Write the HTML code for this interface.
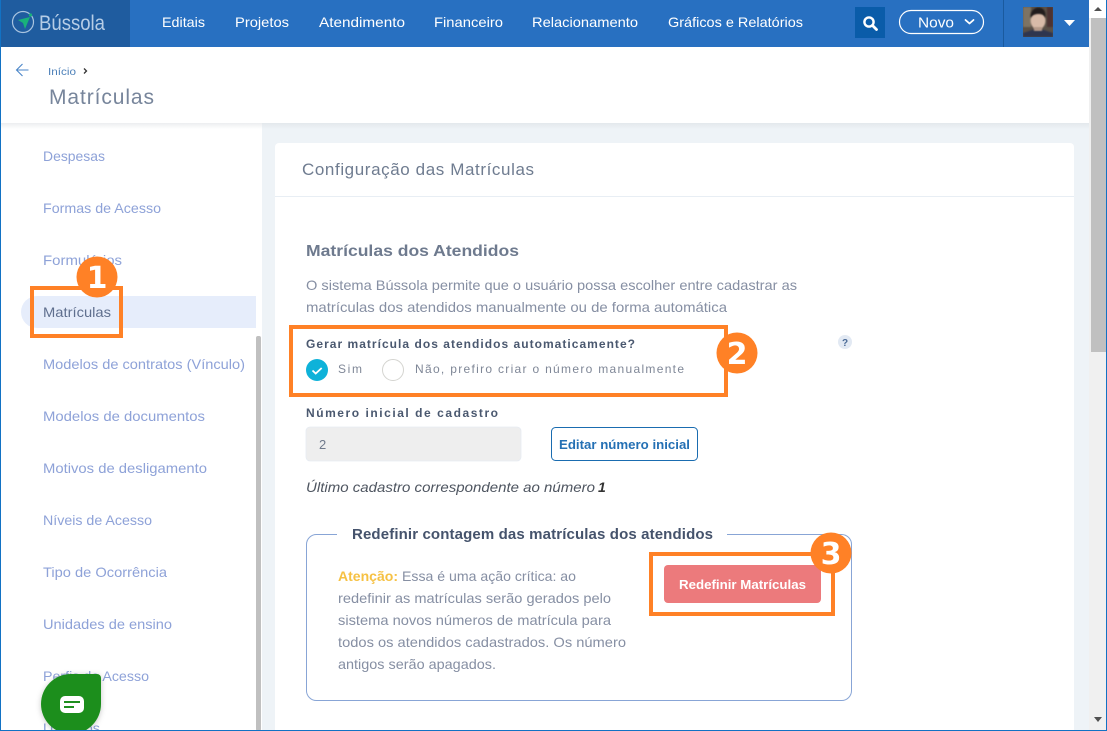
<!DOCTYPE html>
<html lang="pt-BR">
<head>
<meta charset="utf-8">
<title>Matrículas</title>
<style>
html,body{margin:0;padding:0;width:1107px;height:731px;overflow:hidden;background:#fff}
svg{display:block}
text{font-family:"Liberation Sans",sans-serif;white-space:pre}
.nav{font-size:14px;fill:#fff}
.side{font-size:14px;fill:#8ea2d8}
.body{font-size:14px;fill:#868fa3}
.lab{font-size:12px;font-weight:bold;fill:#4a586f}
.opt{font-size:12px;fill:#7f8797}
.num{font-family:"DejaVu Sans",sans-serif;font-size:30px;font-weight:bold;fill:#fff}
</style>
</head>
<body>
<svg width="1107" height="731" viewBox="0 0 1107 731" xmlns="http://www.w3.org/2000/svg">
<defs>
<linearGradient id="hs" x1="0" y1="0" x2="0" y2="1"><stop offset="0" stop-color="#e3e8ec"/><stop offset="1" stop-color="#eef3f7"/></linearGradient>
<linearGradient id="hw" x1="0" y1="0" x2="0" y2="1"><stop offset="0" stop-color="#eceef0"/><stop offset="1" stop-color="#ffffff"/></linearGradient>
<filter id="chatS" x="-30%" y="-30%" width="160%" height="160%"><feDropShadow dx="0" dy="1" stdDeviation="3" flood-color="#000" flood-opacity=".22"/></filter>
<filter id="bl" x="-10%" y="-10%" width="120%" height="120%"><feGaussianBlur stdDeviation=".7"/></filter>
<clipPath id="av"><rect x="1023" y="7" width="30" height="30"/></clipPath>
</defs>

<!-- backgrounds -->
<rect width="1107" height="731" fill="#fff"/>
<rect x="262" y="123" width="828" height="608" fill="#eef3f7"/>
<rect x="1" y="123" width="261" height="6" fill="url(#hw)"/>
<rect x="262" y="123" width="828" height="6" fill="url(#hs)"/>

<!-- scrollbar -->
<rect x="1089" y="0" width="18" height="731" fill="#f0f0f0"/>
<rect x="1089" y="0" width="18" height="18" fill="#fff"/>
<rect x="1091" y="18" width="15" height="334" fill="#c0c0c0"/>
<path d="M1094 11l4-4 4 4z" fill="#505050"/>
<path d="M1094 717h8l-4 5z" fill="#505050"/>

<!-- top bar -->
<rect x="0" y="0" width="1089" height="47" fill="#2870c1"/>
<rect x="1" y="0" width="129" height="47" fill="#1f5c9f"/>
<circle cx="23" cy="22" r="10.5" fill="none" stroke="#a9c4e0" stroke-width="1.2"/>
<path d="M18 20l12-3-5 12-2-6z" fill="#19b27a"/>
<circle cx="30.5" cy="15" r="1.6" fill="#19b27a"/>
<text x="39" y="30" font-size="21" fill="#b6cde6" textLength="66" lengthAdjust="spacingAndGlyphs">Bússola</text>

<text class="nav" x="162" y="27" textLength="43" lengthAdjust="spacingAndGlyphs">Editais</text>
<text class="nav" x="235" y="27" textLength="54" lengthAdjust="spacingAndGlyphs">Projetos</text>
<text class="nav" x="319" y="27" textLength="86" lengthAdjust="spacingAndGlyphs">Atendimento</text>
<text class="nav" x="434" y="27" textLength="69" lengthAdjust="spacingAndGlyphs">Financeiro</text>
<text class="nav" x="532" y="27" textLength="106" lengthAdjust="spacingAndGlyphs">Relacionamento</text>
<text class="nav" x="668" y="27" textLength="135" lengthAdjust="spacingAndGlyphs">Gráficos e Relatórios</text>

<rect x="855" y="7" width="30" height="31" fill="#0a5ca9"/>
<circle cx="869" cy="22" r="4.6" fill="none" stroke="#fff" stroke-width="2.4"/>
<path d="M872.5 25.5l4 4" stroke="#fff" stroke-width="2.8" stroke-linecap="round"/>

<rect x="899.5" y="10.5" width="84" height="23" rx="11.5" fill="none" stroke="#fff" stroke-width="1.2"/>
<text x="918" y="27.5" font-size="15" fill="#fff" textLength="36" lengthAdjust="spacingAndGlyphs">Novo</text>
<path d="M965.5 20l4 3.5 4-3.5" fill="none" stroke="#fff" stroke-width="1.8" stroke-linecap="round" stroke-linejoin="round"/>

<rect x="1003" y="0" width="1" height="47" fill="#1a5a9e"/>

<!-- avatar -->
<g clip-path="url(#av)">
<rect x="1023" y="7" width="30" height="30" fill="#5a5046"/>
<rect x="1023" y="7" width="8" height="20" fill="#7d7364" filter="url(#bl)"/>
<rect x="1047" y="7" width="6" height="20" fill="#4e3230" filter="url(#bl)"/>
<path d="M1023 37v-4l9-3h12l9 3v4z" fill="#2f3550" filter="url(#bl)"/>
<ellipse cx="1038" cy="20.500" rx="7.500" ry="9" fill="#d9bba8" filter="url(#bl)"/>
<rect x="1034" y="27" width="8" height="4" fill="#b59988" filter="url(#bl)"/>
<path d="M1030.500 18c-.5-7 4-10.500 8-10.500s8 3 7 10.500c-1.500-3-3.500-4-7-4s-6 1-8 4z" fill="#211c1a" filter="url(#bl)"/>
</g>
<path d="M1064 20h11l-5.500 6z" fill="#fff"/>

<!-- page header -->
<path d="M22.500 64l-6 6 6 6M16.500 70h12" fill="none" stroke="#4a86c8" stroke-width="1.100"/>
<text x="48" y="75" font-size="10" fill="#4b7fb8" textLength="28" lengthAdjust="spacingAndGlyphs">Início</text>
<path d="M84 68.500l2.500 2.500-2.500 2.500" fill="none" stroke="#333" stroke-width="1.300"/>
<text x="49" y="104" font-size="21" fill="#77859b" textLength="105" lengthAdjust="spacing">Matrículas</text>

<!-- sidebar -->
<path d="M37 296h219v32H37a16 16 0 0 1 0-32z" fill="#e6edfb"/>
<rect x="256" y="336" width="5" height="395" rx="2" fill="#c0c0c0"/>
<text class="side" x="43" y="161" textLength="62" lengthAdjust="spacingAndGlyphs">Despesas</text>
<text class="side" x="43" y="213" textLength="118" lengthAdjust="spacingAndGlyphs">Formas de Acesso</text>
<text class="side" x="43" y="265" textLength="79" lengthAdjust="spacingAndGlyphs">Formulários</text>
<text class="side" x="43" y="317" style="fill:#5f6f8e" textLength="68" lengthAdjust="spacingAndGlyphs">Matrículas</text>
<text class="side" x="43" y="369" textLength="202" lengthAdjust="spacingAndGlyphs">Modelos de contratos (Vínculo)</text>
<text class="side" x="43" y="421" textLength="162" lengthAdjust="spacingAndGlyphs">Modelos de documentos</text>
<text class="side" x="43" y="473" textLength="164" lengthAdjust="spacingAndGlyphs">Motivos de desligamento</text>
<text class="side" x="43" y="525" textLength="109" lengthAdjust="spacingAndGlyphs">Níveis de Acesso</text>
<text class="side" x="43" y="577" textLength="124" lengthAdjust="spacingAndGlyphs">Tipo de Ocorrência</text>
<text class="side" x="43" y="629" textLength="129" lengthAdjust="spacingAndGlyphs">Unidades de ensino</text>
<text class="side" x="43" y="681" textLength="106" lengthAdjust="spacingAndGlyphs">Perfis de Acesso</text>
<text class="side" x="43" y="733" textLength="57" lengthAdjust="spacingAndGlyphs">Usuários</text>

<!-- card -->
<path d="M279 143h791a4 4 0 0 1 4 4v584H275V147a4 4 0 0 1 4-4z" fill="#fff"/>
<rect x="275" y="196" width="799" height="1" fill="#e8eef4"/>
<text x="302" y="175" font-size="17" fill="#6f7c90" textLength="232" lengthAdjust="spacing">Configuração das Matrículas</text>
<text x="306" y="256" font-size="16" font-weight="bold" fill="#6e7a8e" textLength="213" lengthAdjust="spacingAndGlyphs">Matrículas dos Atendidos</text>
<text class="body" x="306" y="290" textLength="491" lengthAdjust="spacingAndGlyphs">O sistema Bússola permite que o usuário possa escolher entre cadastrar as</text>
<text class="body" x="306" y="312" textLength="421" lengthAdjust="spacingAndGlyphs">matrículas dos atendidos manualmente ou de forma automática</text>

<text class="lab" x="306" y="348" textLength="329" lengthAdjust="spacing">Gerar matrícula dos atendidos automaticamente?</text>
<circle cx="317" cy="370" r="11" fill="#0eb2d9"/>
<path d="M312.500 370.500l3.200 3 6-5.500" fill="none" stroke="#fff" stroke-width="1.800"/>
<text class="opt" x="338" y="373" textLength="24" lengthAdjust="spacing">Sim</text>
<circle cx="393" cy="370" r="10.500" fill="#fff" stroke="#d4d4d0" stroke-width="1"/>
<text class="opt" x="415" y="373" textLength="269" lengthAdjust="spacing">Não, prefiro criar o número manualmente</text>

<circle cx="845" cy="342" r="7" fill="#e2e9f3"/>
<text x="845" y="346" font-size="10" font-weight="bold" fill="#4a6a96" text-anchor="middle">?</text>

<text class="lab" x="306" y="417" textLength="192" lengthAdjust="spacing">Número inicial de cadastro</text>
<rect x="306" y="427" width="215" height="34" rx="4" fill="#eeeeee" stroke="#e6ebf2" stroke-width=".8"/>
<text x="319" y="449" font-size="13" fill="#707a8c">2</text>
<rect x="551.500" y="427.500" width="146" height="33" rx="4" fill="#fff" stroke="#1a6cb0" stroke-width="1"/>
<text x="559" y="449" font-size="13" font-weight="bold" fill="#2470b4" textLength="131" lengthAdjust="spacingAndGlyphs">Editar número inicial</text>
<text x="306" y="492" font-size="14" font-style="italic" fill="#4e5560" textLength="289" lengthAdjust="spacingAndGlyphs">Último cadastro correspondente ao número</text>
<text x="598" y="492" font-size="14" font-style="italic" font-weight="bold" fill="#333">1</text>

<!-- fieldset -->
<path d="M337 534.500H317a10 10 0 0 0-10.500 10V690a10 10 0 0 0 10.500 10.500h524a10 10 0 0 0 10.500-10.500V545a10 10 0 0 0-10.500-10.500H727" fill="none" stroke="#88a5d6" stroke-width="1"/>
<text x="352" y="539" font-size="15" font-weight="bold" fill="#45536c" textLength="361" lengthAdjust="spacing">Redefinir contagem das matrículas dos atendidos</text>

<text x="338" y="581" font-size="14" font-weight="bold" fill="#f6c143" textLength="60" lengthAdjust="spacingAndGlyphs">Atenção:</text>
<text class="body" x="402" y="581" textLength="174" lengthAdjust="spacingAndGlyphs">Essa é uma ação crítica: ao</text>
<text class="body" x="338" y="603" textLength="273" lengthAdjust="spacingAndGlyphs">redefinir as matrículas serão gerados pelo</text>
<text class="body" x="338" y="625" textLength="273" lengthAdjust="spacingAndGlyphs">sistema novos números de matrícula para</text>
<text class="body" x="338" y="647" textLength="288" lengthAdjust="spacingAndGlyphs">todos os atendidos cadastrados. Os número</text>
<text class="body" x="338" y="669" textLength="158" lengthAdjust="spacingAndGlyphs">antigos serão apagados.</text>

<rect x="664" y="565" width="157" height="38" rx="4" fill="#ec7a7c"/>
<text x="679" y="589" font-size="13" font-weight="bold" fill="#fff" textLength="127" lengthAdjust="spacingAndGlyphs">Redefinir Matrículas</text>

<!-- chat bubble -->
<path d="M71 674h26a4 4 0 0 1 4 4v26a30 30 0 1 1-60 0 30 30 0 0 1 30-30z" fill="#1e8e1e" filter="url(#chatS)"/>
<rect x="60" y="696" width="24" height="17" rx="5" fill="#fff"/>
<rect x="64" y="701" width="16" height="2" fill="#1e8e1e"/>
<rect x="64" y="706" width="10" height="2" fill="#1e8e1e"/>

<!-- annotations -->
<rect x="32" y="288" width="89" height="48" fill="none" stroke="#ff8126" stroke-width="4"/>
<circle cx="97" cy="277" r="20.500" fill="#ff8126"/>
<text class="num" x="97" y="288" text-anchor="middle">1</text>

<rect x="291" y="327" width="435" height="68" fill="none" stroke="#ff8126" stroke-width="4"/>
<circle cx="737" cy="353" r="20.500" fill="#ff8126"/>
<text class="num" x="737" y="364" text-anchor="middle">2</text>

<rect x="651" y="554" width="182" height="60" fill="none" stroke="#ff8126" stroke-width="4"/>
<circle cx="831" cy="553" r="20.500" fill="#ff8126"/>
<text class="num" x="831" y="564" text-anchor="middle">3</text>

<!-- window frame -->
<rect x="0" y="0" width="1" height="731" fill="#1272c4"/>
<rect x="1106" y="0" width="1" height="731" fill="#1272c4"/>
<rect x="0" y="730" width="1107" height="1" fill="#1272c4"/>
</svg>
</body>
</html>
